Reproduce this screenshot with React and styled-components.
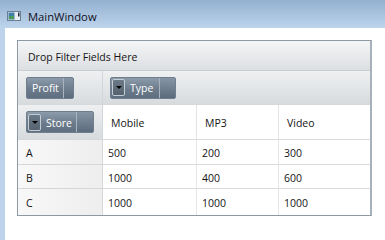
import React from "react";
import styled, { createGlobalStyle } from "styled-components";

const Global = createGlobalStyle`
  html, body { margin: 0; padding: 0; background: #ffffff; }
  body { font-family: "Open Sans", "Noto Sans", sans-serif; }
`;

const Window = styled.div`
  width: 385px;
  height: 240px;
  display: flex;
  flex-direction: column;
  overflow: hidden;
`;

const TitleBar = styled.div`
  height: 28px;
  flex: none;
  display: flex;
  align-items: center;
  gap: 7px;
  padding: 4px 0 0 7px;
  box-sizing: border-box;
  background: linear-gradient(#94b1d0, #bdd4ec);
`;

const AppIcon = styled.svg`
  width: 14px;
  height: 10px;
  flex: none;
`;

const Title = styled.span`
  font-size: 11.25px;
  color: #0e0e1c;
`;

const Frame = styled.div`
  flex: 1;
  display: flex;
  background: #bcd3eb;
  padding-left: 5px;
`;

const Client = styled.div`
  flex: 1;
  background: #ffffff;
  padding: 12px 0 0 12px;
`;

const Grid = styled.div`
  width: 355px;
  height: 176px;
  box-sizing: border-box;
  border: 1px solid #8d99a5;
  border-right: 2px solid #a8b1ba;
  display: grid;
  grid-template-columns: 85px 94px 82px 1fr;
  grid-template-rows: 30px 34px 35px 25px 24px 1fr;
  font-size: 10.5px;
  color: #141414;
`;

const FilterArea = styled.div`
  grid-column: 1 / -1;
  display: flex;
  align-items: center;
  padding-left: 10px;
  padding-top: 2px;
  background: linear-gradient(#f4f5f6, #dcdfe2);
  border-bottom: 1px solid #c9cdd1;
`;

const HeaderArea = styled.div`
  grid-column: ${(p) => p.$span || "auto"};
  display: flex;
  align-items: center;
  padding-left: ${(p) => p.$pad || 8}px;
  background: linear-gradient(#eef0f2, #d8dbde);
  border-right: ${(p) => (p.$divider ? "1px solid #d3d6d9" : "none")};
  border-bottom: 1px solid #d6d9dc;
`;

const FieldButton = styled.div`
  height: 22px;
  width: ${(p) => p.$w}px;
  box-sizing: border-box;
  display: flex;
  align-items: center;
  border-radius: 2px;
  border: 1px solid #6f7e8c;
  background: linear-gradient(#8d9cab, #6c7c8c 55%, #5f6f7f);
  color: #fff;
  font-size: 10.5px;
  overflow: hidden;
`;

const DropBox = styled.div`
  width: 13px;
  height: 17px;
  margin-left: 1px;
  box-sizing: border-box;
  border: 1px solid #c4ccd4;
  border-radius: 2px;
  display: flex;
  align-items: center;
  justify-content: center;
  background: linear-gradient(#6b7a89, #55626f);
  flex: none;
`;

const Arrow = styled.div`
  width: 0;
  height: 0;
  border-left: 3px solid transparent;
  border-right: 3px solid transparent;
  border-top: 3px solid #000;
`;

const Label = styled.div`
  flex: none;
  width: ${(p) => p.$w}px;
  padding-left: ${(p) => p.$pl || 4}px;
  padding-top: 1px;
  height: 100%;
  display: flex;
  align-items: center;
  box-sizing: border-box;
  border-right: 1px solid #a9b4bf;
  white-space: nowrap;
`;

const Tail = styled.div`
  flex: 1;
  height: 100%;
  background: linear-gradient(#8595a4, #5b6b7b);
`;

const ColHeader = styled.div`
  display: flex;
  align-items: center;
  padding-left: 8px;
  padding-top: 1px;
  background: #ffffff;
  border-right: ${(p) => (p.$last ? "none" : "1px solid #e2e4e6")};
  border-bottom: 1px solid #d8dadc;
`;

const RowHeader = styled.div`
  display: flex;
  align-items: center;
  padding-left: 8px;
  padding-top: 2px;
  background: linear-gradient(90deg, #f8f8f8, #eeeeee);
  border-right: 1px solid #d8d8d8;
  border-bottom: ${(p) => (p.$last ? "none" : "1px solid #d6d6d6")};
`;

const Cell = styled.div`
  display: flex;
  align-items: center;
  padding-left: 5px;
  padding-top: 2px;
  background: #ffffff;
  border-right: ${(p) => (p.$last ? "none" : "1px solid #e6e6e6")};
  border-bottom: ${(p) => (p.$lastRow ? "none" : "1px solid #d9d9d9")};
`;

const rows = [
  ["A", "500", "200", "300"],
  ["B", "1000", "400", "600"],
  ["C", "1000", "1000", "1000"],
];

export default function App() {
  return (
    <>
      <Global />
      <Window>
        <TitleBar>
          <AppIcon viewBox="0 0 14 10">
            <rect x="0.5" y="0.5" width="13" height="9" fill="#e8eef4" stroke="#6b7f94" />
            <rect x="1.5" y="1.5" width="6" height="7" fill="#3f7fa8" />
            <rect x="2" y="5" width="5" height="3" fill="#4c9a5a" />
            <rect x="11" y="1.5" width="1.5" height="4" fill="#1d2a38" />
          </AppIcon>
          <Title>MainWindow</Title>
        </TitleBar>
        <Frame>
          <Client>
            <Grid>
              <FilterArea>Drop Filter Fields Here</FilterArea>
              <HeaderArea $divider $pad={8}>
                <FieldButton $w={48}>
                  <Label $w={37} $pl={5}>Profit</Label>
                  <Tail />
                </FieldButton>
              </HeaderArea>
              <HeaderArea $span="2 / -1" $pad={7}>
                <FieldButton $w={66}>
                  <DropBox><Arrow /></DropBox>
                  <Label $w={35} $pl={5}>Type</Label>
                  <Tail />
                </FieldButton>
              </HeaderArea>
              <HeaderArea $divider $pad={8}>
                <FieldButton $w={68}>
                  <DropBox><Arrow /></DropBox>
                  <Label $w={36} $pl={5}>Store</Label>
                  <Tail />
                </FieldButton>
              </HeaderArea>
              <ColHeader>Mobile</ColHeader>
              <ColHeader>MP3</ColHeader>
              <ColHeader $last>Video</ColHeader>
              {rows.map((r, i) => (
                <React.Fragment key={r[0]}>
                  <RowHeader $last={i === rows.length - 1}>{r[0]}</RowHeader>
                  {r.slice(1).map((v, j) => (
                    <Cell key={j} $last={j === 2} $lastRow={i === rows.length - 1}>
                      {v}
                    </Cell>
                  ))}
                </React.Fragment>
              ))}
            </Grid>
          </Client>
        </Frame>
      </Window>
    </>
  );
}
